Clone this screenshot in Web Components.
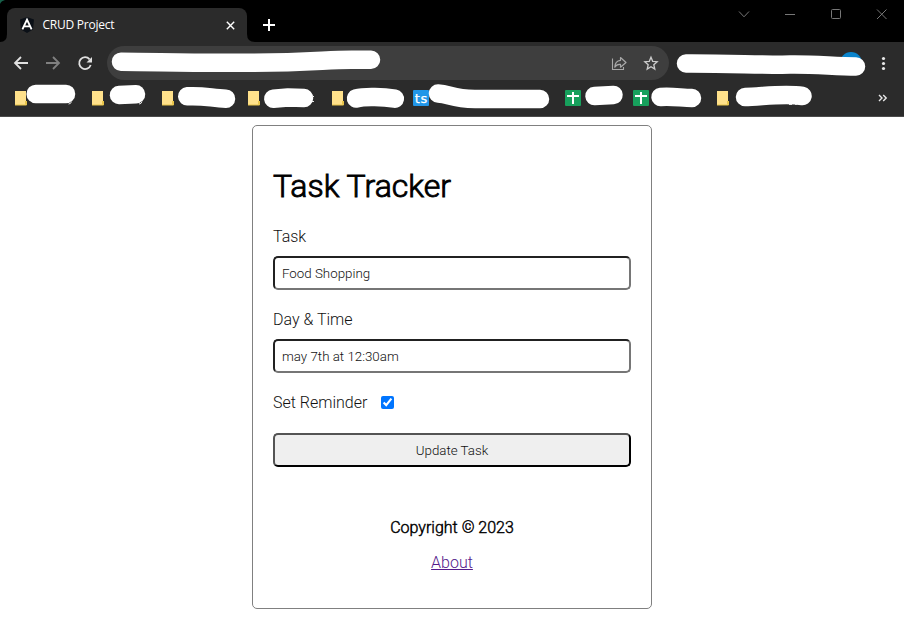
<!DOCTYPE html>
<html lang="en">
<head>
<meta charset="utf-8">
<title>CRUD Project</title>
<style>
body{margin:0;background:#fff;width:904px;height:641px;overflow:hidden;font-family:Roboto,"Liberation Sans",sans-serif;font-weight:300}
</style>
</head>
<body>
<browser-window>
  <tab-strip slot="top"><span>CRUD Project</span></tab-strip>
  <nav-bar slot="top"></nav-bar>
  <bookmarks-bar slot="top">
    <bookmark-item kind="folder" x="15" w="77" d="M35.700 93.900 H66"></bookmark-item>
    <bookmark-item kind="folder" x="92" w="70" d="M119 95 L136 94.300"></bookmark-item>
    <bookmark-item kind="folder" x="162" w="86" d="M187.200 96.300 C204 95.300 212 98.300 226 98.700"></bookmark-item>
    <bookmark-item kind="folder" x="248" w="84" d="M273.300 98.700 L288 97.500 L304 98"></bookmark-item>
    <bookmark-item kind="folder" x="332" w="81" d="M356 98.500 C365 96 384 97 394.800 98.700"></bookmark-item>
    <bookmark-item kind="ts" x="413" w="152" d="M438 93.500 C450 94 452 99 475 99 H540"></bookmark-item>
    <bookmark-item kind="sheet" x="565" w="68" d="M594.500 96 L613.500 95"></bookmark-item>
    <bookmark-item kind="sheet" x="633" w="84" d="M660.500 97 C672 96 682 98 692 98"></bookmark-item>
    <bookmark-item kind="folder" x="717" w="110" d="M745 97 C760 97 783 93 802.500 96"></bookmark-item>
  </bookmarks-bar>
  <task-card heading="Task Tracker">
    <text-field label="Task" value="Food Shopping"></text-field>
    <text-field label="Day &amp; Time" value="may 7th at 12:30am"></text-field>
    <check-field label="Set Reminder"></check-field>
    <submit-button>Update Task</submit-button>
    <card-footer><span>Copyright © 2023</span><span slot="link">About</span></card-footer>
  </task-card>
</browser-window>
<script>
function define(name, render){
  customElements.define(name, class extends HTMLElement{
    connectedCallback(){
      if(!this.shadowRoot) this.attachShadow({mode:'open'}).innerHTML = render(this);
    }
  });
}

define('browser-window', () => `
<style>
:host{display:flex;flex-direction:column;width:904px;height:641px;background:#fff}
.chrome{flex:none;background:#2b2b2b;border-bottom:1px solid #4b4b4b;height:116px}
.page{padding-top:8px;display:flex;justify-content:center}
</style>
<div class="chrome"><slot name="top"></slot></div>
<div class="page"><slot></slot></div>`);

define('tab-strip', () => `
<style>
:host{display:flex;height:42px;background:#000;align-items:flex-end;color:#fff;box-sizing:border-box}
.flare{flex:none;display:block}
.tab{width:240px;height:34px;background:#2b2b2b;border-radius:8px 8px 0 0;display:flex;align-items:center;box-sizing:border-box;padding:0 12px 0 12px}
.title{font:400 12px/16px "Open Sans","Noto Sans",sans-serif;letter-spacing:-.25px;margin-left:7.500px;flex:1;white-space:nowrap}
.plus{margin:0 0 10px 7px}
.win{margin:0 15px 21px auto;display:flex}
svg{display:block}
</style>
<svg class="flare" width="7" height="42"><path d="M0 0H5Q1 1 0 4Z" fill="#17604a"/><path d="M7 34Q7 42 0 42H7Z" fill="#2b2b2b"/></svg>
<div class="tab">
  <svg width="16" height="18" viewBox="0 0 16 18"><path d="M8 1 15 3.500 14 13.500 8 17 2 13.500 1 3.500Z" fill="#0b1017"/><path d="M3.400 13.400 8 3.700 12.600 13.400M5.200 10.400H10.800" fill="none" stroke="#fff" stroke-width="1.900"/></svg>
  <div class="title"><slot></slot></div>
  <svg width="9" height="9" viewBox="0 0 9 9"><path d="M.8.8 8.200 8.200M8.200.8.8 8.200" stroke="#fff" stroke-width="1.400"/></svg>
</div>
<svg class="flare" width="8" height="8"><path d="M0 0Q0 8 8 8H0Z" fill="#2b2b2b"/></svg>
<svg class="plus" width="14" height="14" viewBox="0 0 14 14"><path d="M7 1V13M1 7H13" stroke="#fff" stroke-width="2"/></svg>
<svg class="win" width="152" height="14" viewBox="737 7 152 14" fill="none" stroke="#777" stroke-width="1"><path d="M739 11.500 744 16.800 749 11.500M785 14.500H795M877 9.500 886.500 19M886.500 9.500 877 19"/><rect x="831.500" y="9.500" width="9" height="9" rx="1"/></svg>`);

define('nav-bar', () => `
<style>
:host{display:flex;height:42px;align-items:center}
svg{display:block;flex:none}
.nav{margin-left:12px}
.address{width:562px;height:34px;border-radius:17px;background:#3e3e3e;margin-left:13px;display:flex;align-items:center}
.right{margin-left:auto}
</style>
<svg class="nav" width="82" height="20" viewBox="12 53 82 20" fill="none" stroke-width="1.800">
  <path d="M21 57 15 63 21 69M15.300 63H28" stroke="#e0e0e0"/>
  <path d="M53 57 59 63 53 69M58.700 63H46" stroke="#808080"/>
  <path d="M89.600 59.300A5.900 5.900 0 1 0 90.700 65" stroke="#e0e0e0"/><path d="M92 57V62.500H86.500Z" fill="#e0e0e0"/>
</svg>
<div class="address">
<svg width="562" height="34" viewBox="107 46 562 34" fill="none">
  <path d="M121 61.700C160 62 190 63.200 240 62.800 310 63 330 59 356 59.700H371" stroke="#fff" stroke-width="18.500" stroke-linecap="round"/>
  <path d="M612.500 58.500V69.500H623.500V67" stroke="#a8a8a8" stroke-width="1.100"/>
  <path d="M620.500 57.500 626 62.500 620.500 67.200V64.400Q616.500 64 614.800 67.200 615 60.800 620.500 60.300Z" stroke="#a8a8a8" stroke-width="1.200" stroke-linejoin="round"/>
  <path d="M651 57.200 652.700 61.300 657.200 61.700 653.800 64.700 654.800 69.100 651 66.800 647.200 69.100 648.200 64.700 644.800 61.700 649.300 61.300Z" stroke="#ccc" stroke-width="1.300"/>
</svg></div>
<svg class="right" width="228" height="34" viewBox="676 46 228 34">
  <circle cx="851" cy="63" r="11" fill="#0a84cc"/>
  <path d="M686 63.500C730 63.300 760 65 790 64.600 815 64.200 835 66.500 856 66.500" fill="none" stroke="#fff" stroke-width="18.500" stroke-linecap="round"/>
  <g fill="#e8e8e8"><circle cx="883.500" cy="58.500" r="1.600"/><circle cx="883.500" cy="63.500" r="1.600"/><circle cx="883.500" cy="68.500" r="1.600"/></g>
</svg>`);

define('bookmarks-bar', () => `
<style>
:host{display:flex;height:32px;align-items:center;padding:0 16px 0 15px;margin-top:-2px}
svg{margin-left:auto;display:block}
</style>
<slot></slot>
<svg width="10" height="8" viewBox="0 0 10 8" fill="none" stroke="#e8e8e8" stroke-width="1.400"><path d="M1 1 4 4 1 7M5.200 1 8.200 4 5.200 7"/></svg>`);

const bookmarkIcons = {
  folder: x => `<path d="M${x} 91H${x+11}V101H${x+12}V105H${x}Z" fill="#ffe18b"/><path d="M${x+10.500} 101V104.500M${x+11.500} 101V105H${x}" fill="none" stroke="#e8c54b" stroke-width="1"/>`,
  ts: x => `<rect x="${x}" y="90" width="16" height="16" rx="1" fill="#2196e8"/><text x="${x+8.300}" y="102.500" text-anchor="middle" font-family="DejaVu Sans,sans-serif" font-size="13" font-weight="400" letter-spacing=".6" fill="#fff" stroke="#fff" stroke-width=".25">ts</text>`,
  sheet: x => `<rect x="${x}" y="90" width="16" height="16" rx="1" fill="#17a05c"/><path d="M${x+2} 96H${x+14}M${x+8} 92V104" stroke="#fff" stroke-width="2"/>`
};
define('bookmark-item', el => {
  const x = +el.getAttribute('x'), w = +el.getAttribute('w');
  return `
<style>:host{display:block;flex:none;width:${w}px;height:32px}svg{display:block}</style>
<svg width="${w}" height="32" viewBox="${x} 82 ${w} 32">${bookmarkIcons[el.getAttribute('kind')](x)}
<path d="${el.getAttribute('d')}" fill="none" stroke="#fff" stroke-width="18.500" stroke-linecap="round" stroke-linejoin="round"/>
<path d="M71.500 101.500Q71 104 68.500 104M142 101.500Q141.500 104 139 104M312 96.500H314M312 101.500H314M789 104.500H792M795 104.500H797" stroke="#e8e8e8" fill="none"/></svg>`;
});

define('task-card', el => `
<style>
:host{display:flex;flex-direction:column;box-sizing:border-box;width:400px;height:484px;border:1px solid #808080;border-radius:5px;padding:40px 20px 0}
h1{margin:0 0 20px;font-size:32px;line-height:40px;font-weight:300;-webkit-text-stroke:.9px #000;color:#000}
</style>
<h1>${el.getAttribute('heading')}</h1><slot></slot>`);

define('text-field', el => `
<style>
:host{display:block;height:64px;margin-bottom:19px}
label{display:block;font-size:16px;line-height:22px;margin-bottom:8px;color:#111}
input{display:block;box-sizing:border-box;width:358px;height:34px;border:2px inset #767676;border-radius:5px;padding:3px 7px;font:300 13.333px Roboto,sans-serif;color:#111;background:#fff;outline:0}
</style>
<label>${el.getAttribute('label').replace('&','&amp;')}</label><input type="text" value="${el.getAttribute('value')}">`);

define('check-field', el => `
<style>
:host{display:flex;height:20px;margin-bottom:21px;align-items:center;font-size:16px;line-height:20px}
label{padding-top:2px;color:#111}
input{width:13px;height:13px;margin:0 0 0 14px}
</style>
<label>${el.getAttribute('label')}</label><input type="checkbox" checked>`);

define('submit-button', () => `
<style>
button{display:block;width:358px;height:34px;background:#efefef;border:2px outset #000;border-radius:5px;font:300 13.333px Roboto,sans-serif;color:#111;padding:0}
</style>
<button><slot></slot></button>`);

define('card-footer', () => `
<style>
:host{display:flex;flex-direction:column;align-items:center;margin-top:51px;font-size:16px;line-height:20px}
.copy{-webkit-text-stroke:.45px #000;margin-bottom:15px}
a{color:#551a8b;text-decoration:underline}
</style>
<div class="copy"><slot></slot></div><a href="#"><slot name="link"></slot></a>`);
</script>
</body>
</html>
